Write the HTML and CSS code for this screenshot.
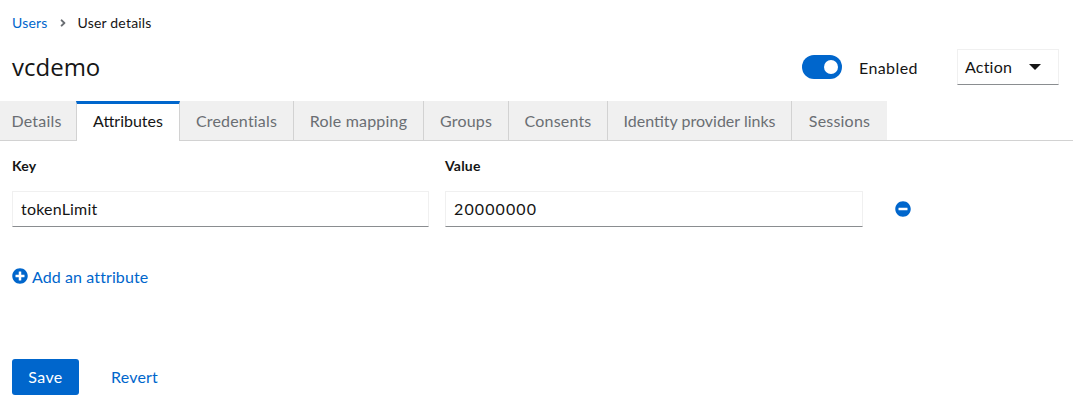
FILE: index.html
```html
<!DOCTYPE html>
<html lang="en">
<head>
<meta charset="utf-8">
<title>User details</title>
<link rel="stylesheet" href="styles.css">
</head>
<body>
<nav class="crumbs"><a class="link" href="#">Users</a>
<svg class="crumb-sep" viewBox="0 0 256 512" width="8" height="12"><path fill="#6a6e73" d="M224.3 273l-136 136c-9.400 9.400-24.600 9.400-33.900 0l-22.600-22.600c-9.400-9.400-9.400-24.600 0-33.900l96.400-96.400-96.400-96.400c-9.400-9.400-9.400-24.600 0-33.900L54.300 103c9.400-9.400 24.600-9.400 33.900 0l136 136c9.500 9.400 9.500 24.600.1 34z"/></svg>
<span>User details</span></nav>
<header class="head">
<h1 class="title">vcdemo</h1>
<div class="switch"><span class="track"><span class="knob"></span></span><span class="switch-label">Enabled</span></div>
<div class="action"><span class="action-text">Action</span><span class="caret"></span></div>
</header>
<div class="tabs">
<a class="tab t1">Details</a><a class="tab t2 current">Attributes</a><a class="tab t3">Credentials</a><a class="tab t4">Role mapping</a><a class="tab t5">Groups</a><a class="tab t6">Consents</a><a class="tab t7">Identity provider links</a><a class="tab t8">Sessions</a>
</div>
<main class="body">
<div class="grid">
<div class="label">Key</div><div class="label">Value</div><div></div>
<input class="field" value="tokenLimit"><input class="field numeric" value="20000000">
<svg class="remove" viewBox="0 0 512 512" width="16" height="16"><path fill="#06c" d="M256 8C119 8 8 119 8 256s111 248 248 248 248-111 248-248S393 8 256 8zM124 296c-6.600 0-12-5.400-12-12v-56c0-6.600 5.400-12 12-12h264c6.600 0 12 5.400 12 12v56c0 6.600-5.400 12-12 12H124z"/></svg>
</div>
<a class="add link" href="#"><svg viewBox="0 0 512 512" width="16" height="16"><path fill="#06c" d="M256 8C119 8 8 119 8 256s111 248 248 248 248-111 248-248S393 8 256 8zm144 276c0 6.600-5.400 12-12 12h-92v92c0 6.600-5.400 12-12 12h-56c-6.600 0-12-5.400-12-12v-92h-92c-6.600 0-12-5.400-12-12v-56c0-6.600 5.400-12 12-12h92v-92c0-6.600 5.400-12 12-12h56c6.600 0 12 5.400 12 12v92h92c6.600 0 12 5.400 12 12v56z"/></svg><span>Add an attribute</span></a>
<div class="buttons"><button class="save">Save</button><a class="revert link" href="#">Revert</a></div>
</main>
</body>
</html>
```
FILE: styles.css
```css
* { box-sizing: border-box; }
html, body { margin: 0; padding: 0; }
body { width: 1073px; height: 416px; overflow: hidden; background: #fff; color: #151515; font-family: "Lato", "Open Sans", sans-serif; font-size: 16px; letter-spacing: 0.2px; }
.link { color: #06c; text-decoration: none; }
.crumbs { display: flex; align-items: center; height: 21px; margin: 12px 0 0 12px; font-size: 14px; }
.crumb-sep { margin: 0 11px 0 11px; }
.head { display: flex; align-items: center; height: 50px; margin-top: 9px; padding: 0 14px 0 12px; }
.title { flex: 1; margin: 0; font-family: "Open Sans", sans-serif; font-size: 24px; font-weight: 400; line-height: 36px; letter-spacing: 0; }
.switch { display: flex; align-items: center; }
.track { display: flex; justify-content: flex-end; align-items: center; width: 40px; height: 24px; padding-right: 4px; border-radius: 12px; background: #06c; }
.knob { width: 14px; height: 14px; border-radius: 50%; background: #fff; }
.switch-label { margin-left: 17px; width: 98px; letter-spacing: 0.4px; }
.action { display: flex; align-items: center; justify-content: space-between; width: 102px; height: 36px; padding: 0 17px 0 7px; border: 1px solid #f0f0f0; border-bottom-color: #8a8d90; }
.action-text { padding-bottom: 2px; }
.caret { width: 0; height: 0; border-left: 6px solid transparent; border-right: 6px solid transparent; border-top: 6px solid #151515; }
.tabs { display: flex; height: 40px; margin-top: 9px; border-bottom: 1px solid #d2d2d2; letter-spacing: 0.2px; }
.tab { display: flex; align-items: center; justify-content: center; height: 39px; background: #f0f0f0; color: #6a6e73; border-right: 1px solid #d2d2d2; }
.tab:last-child { border-right: 0; }
.t1 { width: 76px; border-right: 0; padding-right: 3px; }
.t2 { width: 104px; letter-spacing: 0; }
.t3 { width: 114px; }
.t4 { width: 130px; }
.t5 { width: 85px; }
.t6 { width: 99px; }
.t7 { width: 184px; letter-spacing: 0; }
.t8 { width: 95px; }
.current { height: 40px; padding-bottom: 5px; background: #fff; color: #151515; border-top: 3px solid #06c; border-left: 1px solid #d2d2d2; }
.body { padding: 15px 12px 0; }
.grid { display: grid; grid-template-columns: 417px 418px 1fr; column-gap: 16px; align-items: center; }
.label { height: 35px; font-size: 14px; font-weight: 700; line-height: 20px; }
.field { width: 100%; height: 36px; padding: 0 8px 2px; border: 1px solid #f0f0f0; border-bottom-color: #8a8d90; color: #151515; font: inherit; letter-spacing: inherit; outline: 0; }
.numeric { letter-spacing: 1.1px; }
.remove { margin-left: 16px; }
.add { display: flex; align-items: center; gap: 4px; margin-top: 39px; height: 20px; letter-spacing: 0.1px; }
.buttons { display: flex; align-items: center; margin-top: 73px; }
.save { width: 67px; height: 36px; padding: 0 0 2px; border: 0; border-radius: 3px; background: #06c; color: #fff; font: inherit; letter-spacing: 0.4px; }
.revert { margin-left: 32px; padding-bottom: 2px; }
```
